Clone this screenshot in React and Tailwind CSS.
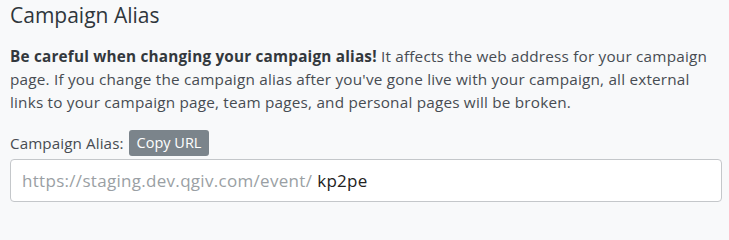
import React from 'react';

export default function App() {
  return (
    <div className="min-h-screen w-[729px] bg-[#f8f9fa] px-[10px] pt-0 font-['Open_Sans','Liberation_Sans',sans-serif] text-[#3a3f44]">
      <h2 className="text-[21px] leading-[30px] text-[#2f363c]">Campaign Alias</h2>

      <p className="mt-[15px] w-[712px] text-[15.3px] leading-[23px] tracking-[0.2px] text-[#474c52]">
        <strong className="font-bold text-[#33383d]">Be careful when changing your campaign alias!</strong> It affects the web address for
        your campaign page. If you change the campaign alias after you've gone live with your campaign, all external
        links to your campaign page, team pages, and personal pages will be broken.
      </p>

      <div className="mt-[16px] flex items-center gap-[5px]">
        <span className="text-[15.2px] tracking-[0.1px] text-[#474c52]">Campaign Alias:</span>
        <button className="rounded-[3px] bg-[#7b848b] px-[8px] py-[2px] text-[14.5px] leading-[22px] text-white">
          Copy URL
        </button>
      </div>

      <div className="mt-[3px] flex h-[43px] w-[712px] items-center rounded-[4px] border border-[#c4c7ca] bg-white px-[11px] text-[17px] tracking-[0.3px]">
        <span className="text-[#9a9fa4]">https://staging.dev.qgiv.com/event/</span>
        <span className="ml-[5px] text-[#222]">kp2pe</span>
      </div>
    </div>
  );
}
